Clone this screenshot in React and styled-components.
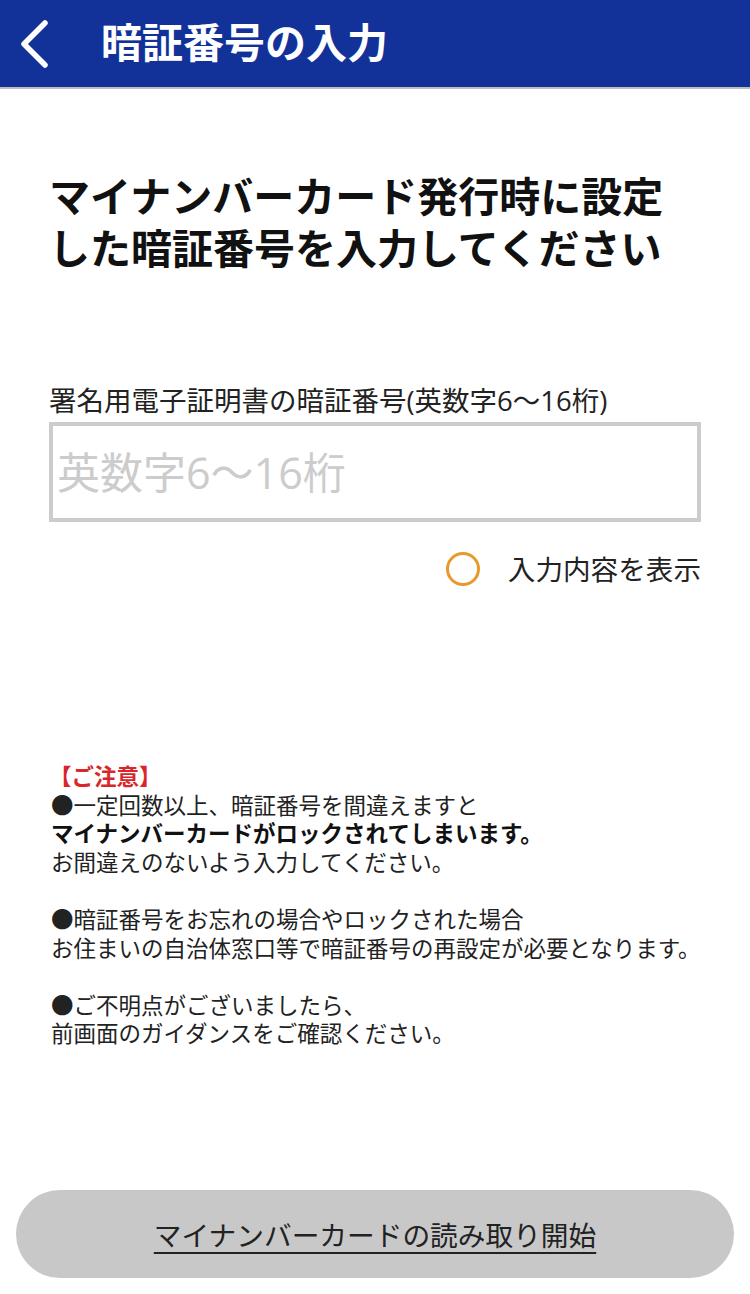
import React, { useState } from "react";
import styled, { createGlobalStyle } from "styled-components";

const GlobalStyle = createGlobalStyle`
  html, body {
    margin: 0;
    padding: 0;
    background: #fff;
    font-family: "Open Sans", "Noto Sans CJK JP", sans-serif;
    color: #111;
  }
  * { box-sizing: border-box; }
`;

const Page = styled.div`
  display: flex;
  flex-direction: column;
  min-height: 1294px;
`;

const Header = styled.header`
  height: 89px;
  background: #12329a;
  border-bottom: 2px solid #bdbdbd;
  display: flex;
  align-items: center;
  padding-left: 14px;
`;

const BackButton = styled.button`
  width: 40px;
  height: 56px;
  padding: 0;
  border: none;
  background: transparent;
  display: flex;
  align-items: center;
  justify-content: center;
  cursor: pointer;
`;

const Title = styled.h1`
  margin: 0 0 2px 47px;
  color: #fff;
  font-size: 41px;
  font-weight: 700;
  line-height: 1;
`;

const Body = styled.main`
  flex: 1;
  display: flex;
  flex-direction: column;
  padding: 81px 49px 0 49px;
`;

const Lead = styled.h2`
  margin: 0;
  font-size: 41px;
  line-height: 52px;
  font-weight: 700;
  color: #111;
`;

const Label = styled.label`
  display: block;
  margin-top: 110px;
  font-size: 27.5px;
  line-height: 34px;
  color: #222;
`;

const PinInput = styled.input`
  margin-top: 4px;
  width: 652px;
  height: 100px;
  border: 4px solid #cccccc;
  border-radius: 0;
  padding: 0 4px;
  font-family: inherit;
  font-size: 43px;
  color: #222;
  outline: none;
  &::placeholder {
    color: #cccccc;
  }
`;

const ToggleRow = styled.label`
  margin-top: 30px;
  align-self: flex-end;
  display: flex;
  align-items: center;
  gap: 28px;
  font-size: 27.6px;
  line-height: 34px;
  color: #222;
  cursor: pointer;
`;

const Radio = styled.span`
  width: 34px;
  height: 34px;
  border-radius: 50%;
  border: 3px solid #e8992c;
  background: ${(p) => (p.$on ? "radial-gradient(#e8992c 45%, transparent 48%)" : "transparent")};
`;

const Notice = styled.div`
  margin-top: 177px;
  padding-left: 2px;
  font-size: 22.5px;
  line-height: 28.6px;
  color: #222;
`;

const NoticeTitle = styled.div`
  color: #d9262a;
  font-weight: 700;
  margin-left: -2px;
`;

const Para = styled.p`
  margin: 0 0 28.6px;
`;

const Strong = styled.strong`
  font-weight: 700;
  color: #111;
`;

const Footer = styled.footer`
  padding: 0 16px 16px;
  margin-top: auto;
`;

const StartButton = styled.button`
  width: 100%;
  height: 88px;
  border: none;
  border-radius: 44px;
  background: #c8c8c8;
  font-family: inherit;
  font-size: 27.7px;
  color: #222;
  text-decoration: underline;
  text-underline-offset: 6px;
  text-decoration-thickness: 2px;
  cursor: pointer;
`;

export default function App() {
  const [show, setShow] = useState(false);

  return (
    <Page>
      <GlobalStyle />
      <Header>
        <BackButton aria-label="戻る">
          <svg width="32" height="50" viewBox="0 0 32 50">
            <path
              d="M27 4 L6 25 L27 46"
              fill="none"
              stroke="#fff"
              strokeWidth="5.5"
              strokeLinecap="round"
              strokeLinejoin="round"
            />
          </svg>
        </BackButton>
        <Title>暗証番号の入力</Title>
      </Header>

      <Body>
        <Lead>
          マイナンバーカード発行時に設定
          <br />
          した暗証番号を入力してください
        </Lead>

        <Label htmlFor="pin">署名用電子証明書の暗証番号(英数字6〜16桁)</Label>
        <PinInput
          id="pin"
          type={show ? "text" : "password"}
          placeholder="英数字6〜16桁"
        />

        <ToggleRow onClick={() => setShow(!show)}>
          <Radio $on={show} />
          入力内容を表示
        </ToggleRow>

        <Notice>
          <NoticeTitle>【ご注意】</NoticeTitle>
          <Para>
            ●一定回数以上、暗証番号を間違えますと
            <br />
            <Strong>マイナンバーカードがロックされてしまいます。</Strong>
            <br />
            お間違えのないよう入力してください。
          </Para>
          <Para>
            ●暗証番号をお忘れの場合やロックされた場合
            <br />
            お住まいの自治体窓口等で暗証番号の再設定が必要となります。
          </Para>
          <Para>
            ●ご不明点がございましたら、
            <br />
            前画面のガイダンスをご確認ください。
          </Para>
        </Notice>
      </Body>

      <Footer>
        <StartButton>マイナンバーカードの読み取り開始</StartButton>
      </Footer>
    </Page>
  );
}
